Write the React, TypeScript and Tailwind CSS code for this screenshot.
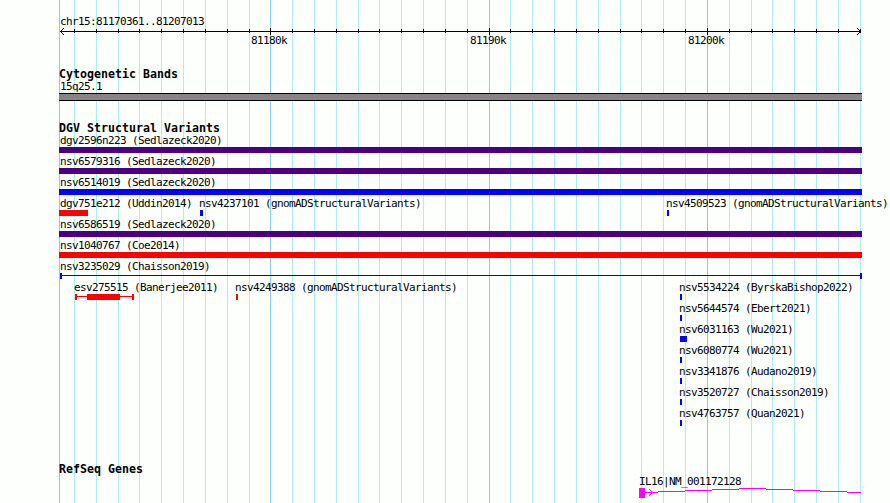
type Feature = {
  label: string;
  x: number;
  labelX?: number;
  width: number;
  color: string;
  kind?: "box" | "span" | "banded";
};

const LEFT = 59;
const WIDTH = 803;

const majorLines = [59, 270, 489, 707];
const minorLines = [
  74, 96, 118, 139, 161, 183, 205, 227, 249, 292, 314, 336, 358, 379, 401, 423,
  445, 467, 510, 532, 554, 576, 598, 620, 641, 663, 685, 729, 751, 772, 794,
  816, 838, 860,
];

const axisLabels = [
  { text: "81180k", x: 251 },
  { text: "81190k", x: 470 },
  { text: "81200k", x: 688 },
];

const PURPLE = "bg-[#4b0082]";
const BLUE = "bg-[#0000ff]";
const RED = "bg-[#ff0000]";

const variantRows: Feature[][] = [
  [{ label: "dgv2596n223 (Sedlazeck2020)", x: 59, width: WIDTH, color: PURPLE }],
  [{ label: "nsv6579316 (Sedlazeck2020)", x: 59, width: WIDTH, color: PURPLE }],
  [{ label: "nsv6514019 (Sedlazeck2020)", x: 59, width: WIDTH, color: BLUE }],
  [
    { label: "dgv751e212 (Uddin2014)", x: 59, width: 29, color: RED },
    {
      label: "nsv4237101 (gnomADStructuralVariants)",
      x: 200,
      labelX: 199,
      width: 3,
      color: BLUE,
    },
    {
      label: "nsv4509523 (gnomADStructuralVariants)",
      x: 667,
      labelX: 666,
      width: 2,
      color: BLUE,
    },
  ],
  [{ label: "nsv6586519 (Sedlazeck2020)", x: 59, width: WIDTH, color: PURPLE }],
  [{ label: "nsv1040767 (Coe2014)", x: 59, width: WIDTH, color: RED }],
  [
    {
      label: "nsv3235029 (Chaisson2019)",
      x: 60,
      width: 802,
      color: BLUE,
      kind: "span",
    },
  ],
  [
    {
      label: "esv275515 (Banerjee2011)",
      x: 75,
      labelX: 74,
      width: 59,
      color: RED,
      kind: "banded",
    },
    {
      label: "nsv4249388 (gnomADStructuralVariants)",
      x: 236,
      labelX: 235,
      width: 2,
      color: RED,
    },
    {
      label: "nsv5534224 (ByrskaBishop2022)",
      x: 680,
      labelX: 679,
      width: 2,
      color: BLUE,
    },
  ],
  [{ label: "nsv5644574 (Ebert2021)", x: 680, labelX: 679, width: 2, color: BLUE }],
  [{ label: "nsv6031163 (Wu2021)", x: 680, labelX: 679, width: 7, color: BLUE }],
  [{ label: "nsv6080774 (Wu2021)", x: 680, labelX: 679, width: 2, color: BLUE }],
  [{ label: "nsv3341876 (Audano2019)", x: 680, labelX: 679, width: 2, color: BLUE }],
  [{ label: "nsv3520727 (Chaisson2019)", x: 680, labelX: 679, width: 2, color: BLUE }],
  [{ label: "nsv4763757 (Quan2021)", x: 680, labelX: 679, width: 2, color: BLUE }],
];

function Label({ children, x }: { children: string; x: number }) {
  return (
    <div
      className="h-3 w-max text-[11px] leading-3 tracking-[-0.622px] whitespace-pre"
      style={{ marginLeft: x }}
    >
      {children}
    </div>
  );
}

function TrackTitle({ children }: { children: string }) {
  return (
    <h2 className="ml-[59px] h-[13px] text-[11.6px] leading-[13px] font-bold tracking-[0.017px]">
      {children}
    </h2>
  );
}

function Glyph({ feature }: { feature: Feature }) {
  const { x, width, color, kind = "box" } = feature;
  const style = { marginLeft: x, width };

  if (kind === "box") {
    return <div className={`h-1.5 ${color}`} style={style} />;
  }

  return (
    <div className="flex h-1.5 items-center" style={style}>
      <div className={`h-1.5 w-0.5 ${color}`} />
      {kind === "banded" ? (
        <>
          <div className={`-mt-px h-px w-2.5 ${color}`} />
          <div className={`h-1.5 w-[33px] ${color}`} />
          <div className={`-mt-px h-px grow ${color}`} />
        </>
      ) : (
        <div className={`-mt-px h-px grow ${color}`} />
      )}
      <div className={`h-1.5 w-0.5 ${color}`} />
    </div>
  );
}

function Gridlines() {
  return (
    <svg
      className="absolute inset-0"
      width="890"
      height="503"
      shapeRendering="crispEdges"
      aria-hidden="true"
    >
      {minorLines.map((x) => (
        <rect key={x} x={x} y="0" width="1" height="503" fill="#afeeee" />
      ))}
      {majorLines.map((x) => (
        <rect key={x} x={x} y="0" width="1" height="503" fill="#87ceeb" />
      ))}
    </svg>
  );
}

function Axis() {
  return (
    <svg
      className="-mt-px block h-[9px] w-full"
      viewBox="0 0 890 9"
      shapeRendering="crispEdges"
      aria-hidden="true"
    >
      <rect x="60" y="4" width="801" height="1" />
      {minorLines.map((x) => (
        <rect key={x} x={x} y="2" width="1" height="4" />
      ))}
      {majorLines.slice(1).map((x) => (
        <rect key={x} x={x} y="1" width="1" height="7" />
      ))}
      {/* arrowheads */}
      {[1, 2, 3].map((i) => (
        <g key={i}>
          <rect x={60 + i} y={4 - i} width="1" height="1" />
          <rect x={60 + i} y={4 + i} width="1" height="1" />
          <rect x={860 - i} y={4 - i} width="1" height="1" />
          <rect x={860 - i} y={4 + i} width="1" height="1" />
        </g>
      ))}
    </svg>
  );
}

function RefSeqGene() {
  return (
    <svg
      className="block h-3.5 w-full"
      viewBox="0 0 890 14"
      shapeRendering="crispEdges"
      aria-label="IL16"
    >
      <g fill="#ff00ff">
        <rect x="639" y="0" width="6" height="10" />
        <rect x="645" y="4" width="13" height="1" />
        <rect x="658" y="3" width="27" height="1" />
        <rect x="685" y="2" width="27" height="1" />
        <rect x="712" y="1" width="27" height="1" />
        <rect x="739" y="0" width="27" height="1" />
        <rect x="766" y="1" width="27" height="1" />
        <rect x="793" y="2" width="27" height="1" />
        <rect x="820" y="3" width="27" height="1" />
        <rect x="847" y="4" width="14" height="1" />
        {[1, 2, 3].map((i) => (
          <g key={i}>
            <rect x={652 - i} y={4 - i} width="1" height="1" />
            <rect x={652 - i} y={4 + i} width="1" height="1" />
          </g>
        ))}
      </g>
    </svg>
  );
}

export default function App() {
  return (
    <main className="relative h-[503px] w-[890px] overflow-hidden bg-[#fdfffc] font-['DejaVu_Sans_Mono',monospace] text-black">
      <Gridlines />
      <div className="relative flex flex-col">
        <header className="pt-4">
          <Label x={60}>chr15:81170361..81207013</Label>
          <Axis />
          <div className="-mt-px grid">
            {axisLabels.map((label) => (
              <div key={label.text} className="col-start-1 row-start-1">
                <Label x={label.x}>{label.text}</Label>
              </div>
            ))}
          </div>
        </header>

        <section className="pt-[21px]">
          <TrackTitle>Cytogenetic Bands</TrackTitle>
          <Label x={60}>15q25.1</Label>
          <div
            className="h-2 border-y border-black bg-[#878387]"
            style={{ marginLeft: LEFT, width: WIDTH }}
          />
        </section>

        <section className="pt-[21px]">
          <TrackTitle>DGV Structural Variants</TrackTitle>
          {variantRows.map((row) => (
            <div key={row[0].label} className="grid h-[21px]">
              {row.map((feature) => (
                <div key={feature.label} className="col-start-1 row-start-1">
                  <Label x={feature.labelX ?? 60}>{feature.label}</Label>
                  <Glyph feature={feature} />
                </div>
              ))}
            </div>
          ))}
        </section>

        <section className="pt-[34px]">
          <TrackTitle>RefSeq Genes</TrackTitle>
          <Label x={639}>IL16|NM_001172128</Label>
          <RefSeqGene />
        </section>
      </div>
    </main>
  );
}
